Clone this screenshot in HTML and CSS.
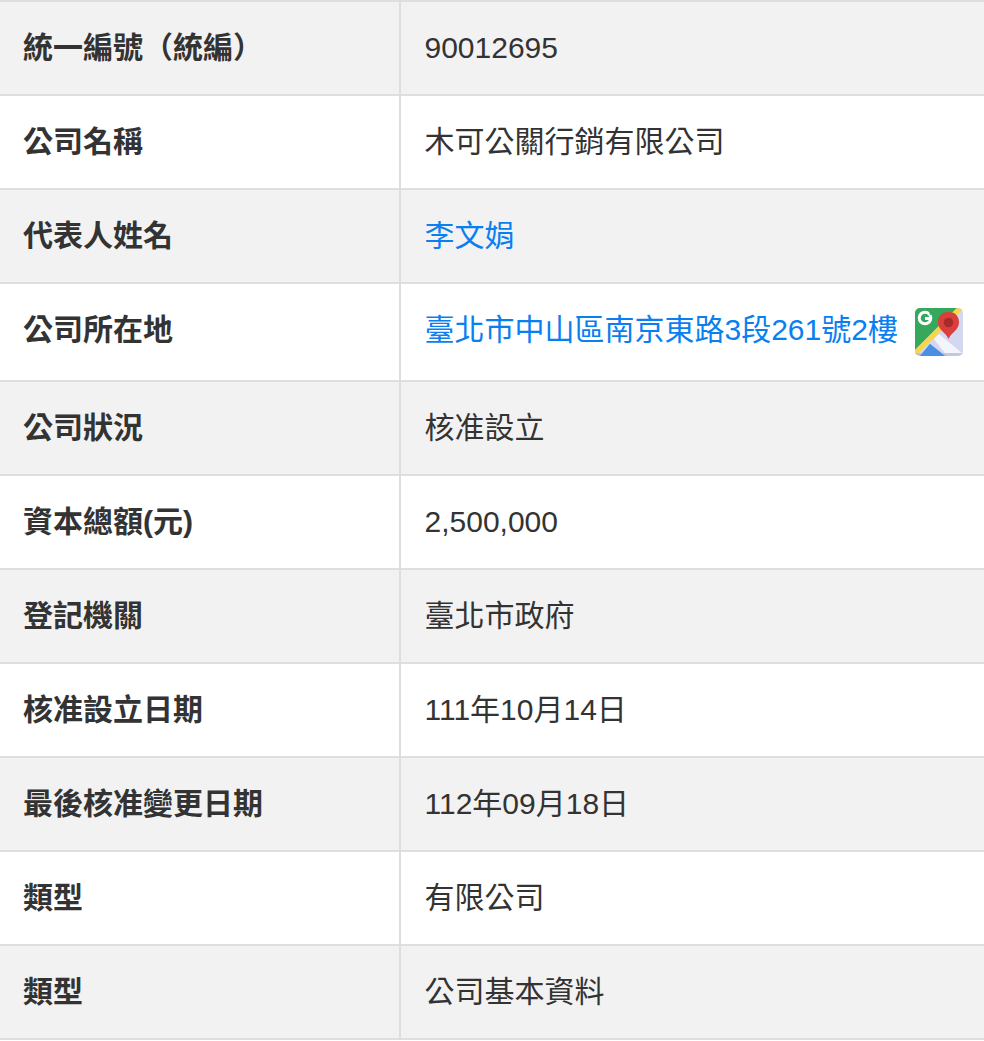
FILE: index.html
```html
<!DOCTYPE html>
<html lang="zh-Hant">
<head>
<meta charset="utf-8">
<title>公司基本資料</title>
<link rel="stylesheet" href="styles.css">
</head>
<body>
<table class="info">
<tbody>
<tr><th>統一編號（統編）</th><td>90012695</td></tr>
<tr><th>公司名稱</th><td>木可公關行銷有限公司</td></tr>
<tr><th>代表人姓名</th><td><a href="#">李文娟</a></td></tr>
<tr class="tall"><th class="raised">公司所在地</th><td><div class="addr"><a href="#">臺北市中山區南京東路3段261號2樓</a>
<svg class="map" viewBox="0 0 48 48" aria-hidden="true">
<defs><clipPath id="c"><rect width="48" height="48" rx="5"/></clipPath></defs>
<g clip-path="url(#c)">
<rect width="48" height="48" fill="#d3d7f0"/>
<path d="M0 0H42L0 42Z" fill="#35a85c"/>
<path d="M0 42L42 0H48V1L1 48H0Z" fill="#f7d64a"/>
<path d="M5 48L15 36L30 48Z" fill="#4a90e2"/>
<path d="M19 31L24 26L47 45V48H32Z" fill="#f4f5fa"/>
<rect y="45" width="48" height="3" fill="#b9bcd8" opacity=".8"/>
<path d="M5 48L15 36L30 48Z" fill="#4a90e2"/>
<circle cx="10" cy="10" r="5.800" fill="none" stroke="#fff" stroke-width="3"/>
<path d="M10 9H17V12H10Z" fill="#fff"/>
<path d="M14 3L19 6L15 7Z" fill="#35a85c"/>
<path d="M33.500 4C26 4 23 9 23 14.500C23 22 30.500 24 33.500 31C36.500 24 44 22 44 14.500C44 9 41 4 33.500 4Z" fill="#db3f3b"/>
<circle cx="33.500" cy="14.500" r="4.800" fill="#a82b2b"/>
</g>
</svg></div></td></tr>
<tr><th>公司狀況</th><td>核准設立</td></tr>
<tr><th>資本總額(元)</th><td>2,500,000</td></tr>
<tr><th>登記機關</th><td>臺北市政府</td></tr>
<tr><th>核准設立日期</th><td>111年10月14日</td></tr>
<tr><th>最後核准變更日期</th><td>112年09月18日</td></tr>
<tr><th>類型</th><td>有限公司</td></tr>
<tr><th>類型</th><td>公司基本資料</td></tr>
</tbody>
</table>
</body>
</html>
```
FILE: styles.css
```css
html, body {
  margin: 0;
  padding: 0;
  background: #fff;
}
.info {
  width: 984px;
  border-collapse: collapse;
  table-layout: fixed;
  font-family: "Liberation Sans", "Noto Sans CJK TC", sans-serif;
  font-size: 30px;
  line-height: 45px;
  color: #333;
}
.info tr {
  height: 94px;
}
.info tr.tall {
  height: 98px;
}
.info tbody tr:nth-child(odd) {
  background: #f2f2f2;
}
.info th, .info td {
  border: 2px solid #dedede;
  border-left: 0;
  border-right: 0;
  padding: 0 0 2px 23px;
  text-align: left;
  vertical-align: middle;
  box-sizing: border-box;
}
.info td {
  padding-left: 23.5px;
}
.info th {
  width: 400px;
  font-weight: 700;
  border-right: 2px solid #dedede;
}
.info th.raised {
  padding-bottom: 6px;
}
.addr {
  display: flex;
  align-items: center;
  gap: 17.5px;
}
.addr a {
  margin-bottom: 4px;
}
.info a {
  color: #0a7ff0;
  text-decoration: none;
}
.map {
  width: 48px;
  height: 48px;
  flex: none;
  margin-top: 2px;
}
```
